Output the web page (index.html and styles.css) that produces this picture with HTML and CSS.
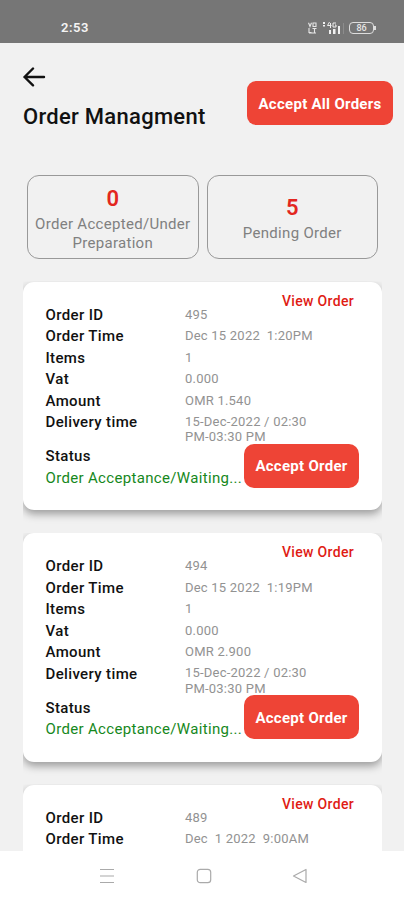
FILE: index.html
```
<!DOCTYPE html>
<html lang="en">
<head>
<meta charset="utf-8">
<title>Order Managment</title>
<link rel="stylesheet" href="styles.css">
</head>
<body>
<div class="screen">
  <div class="statusbar">
    <span class="clock">2:53</span>
    <div class="indicators">
      <svg class="volte" width="9" height="12" viewBox="0 0 9 12" fill="none" stroke="#e6e6e6" stroke-width="1.1"><path d="M.5 .8 2 4.5 3.5 .8M5 1h3v3.5H5zM1 6v4.5h2.5M4.5 6.5h4M6.5 6.5v4M1 11h7"/></svg>
      <svg class="signal" width="24" height="14" viewBox="0 0 24 14"><path fill="#f0f0f0" d="M1 1h2v2H1zM1 4h2v1.500H1zM7 9h2v4H7zM11 8h2.500v5H11zM16 5h2v8h-2z"/><path fill="#8c8c8c" d="M21 2h1v11h-1z"/><path fill="none" stroke="#eee" d="M7.500 1 5.500 4.500h4M8.500 2v5M14 2h-3v4h3V4h-1"/></svg>
      <div class="battery">86</div>
    </div>
  </div>
  <main class="content">
    <header class="header">
      <div>
        <svg class="back" width="23" height="20" viewBox="0 0 23 20" fill="none" stroke="#111" stroke-width="2.400" stroke-linecap="round" stroke-linejoin="round"><path d="M21 10H1.500M10 1.500 1.500 10 10 18.300"/></svg>
        <h1 class="title">Order Managment</h1>
      </div>
      <button class="btn btn-all">Accept All Orders</button>
    </header>
    <section class="stats">
      <div class="stat"><strong>0</strong><span>Order Accepted/Under Preparation</span></div>
      <div class="stat stat-short"><strong>5</strong><span>Pending Order</span></div>
    </section>
    <section class="orders">
      <div class="slot"><article class="card">
        <a class="view">View Order</a>
        <dl class="rows">
          <dt>Order ID</dt><dd>495</dd>
          <dt>Order Time</dt><dd>Dec 15 2022&nbsp; 1:20PM</dd>
          <dt>Items</dt><dd>1</dd>
          <dt>Vat</dt><dd>0.000</dd>
          <dt>Amount</dt><dd>OMR 1.540</dd>
          <dt>Delivery time</dt><dd class="delivery">15-Dec-2022 / 02:30<br>PM-03:30 PM</dd>
          <dt>Status</dt>
        </dl>
        <div class="state">Order Acceptance/Waiting...</div>
        <button class="btn btn-one">Accept Order</button>
      </article></div>
      <div class="slot"><article class="card">
        <a class="view">View Order</a>
        <dl class="rows">
          <dt>Order ID</dt><dd>494</dd>
          <dt>Order Time</dt><dd>Dec 15 2022&nbsp; 1:19PM</dd>
          <dt>Items</dt><dd>1</dd>
          <dt>Vat</dt><dd>0.000</dd>
          <dt>Amount</dt><dd>OMR 2.900</dd>
          <dt>Delivery time</dt><dd class="delivery">15-Dec-2022 / 02:30<br>PM-03:30 PM</dd>
          <dt>Status</dt>
        </dl>
        <div class="state">Order Acceptance/Waiting...</div>
        <button class="btn btn-one">Accept Order</button>
      </article></div>
      <div class="slot"><article class="card">
        <a class="view">View Order</a>
        <dl class="rows">
          <dt>Order ID</dt><dd>489</dd>
          <dt>Order Time</dt><dd>Dec&nbsp; 1 2022&nbsp; 9:00AM</dd>
        </dl>
      </article></div>
    </section>
  </main>
  <nav class="navbar">
    <svg width="16" height="16" viewBox="0 0 16 16" fill="none" stroke="#aaa" stroke-width="1.200"><path d="M1 1.500h14M1 8h14M1 14.500h14"/></svg>
    <svg width="16" height="16" viewBox="0 0 16 16" fill="none" stroke="#aaa" stroke-width="1.200"><rect x="1.300" y="1.300" width="13.400" height="13.400" rx="3"/></svg>
    <svg width="16" height="16" viewBox="0 0 16 16" fill="none" stroke="#aaa" stroke-width="1.200" stroke-linejoin="round"><path d="M14 1.500v13L1.500 8z"/></svg>
  </nav>
</div>
</body>
</html>
```
FILE: styles.css
```
* { box-sizing: border-box; margin: 0; padding: 0; }
body { font-family: Roboto, "Liberation Sans", sans-serif; background: #f1f1f1; color: #111; }
.screen { width: 404px; height: 900px; display: flex; flex-direction: column; overflow: hidden; }
.statusbar { height: 43px; flex: none; background: #767676; display: flex; justify-content: space-between; padding: 20px 30px 0 61px; }
.clock { font-size: 13px; line-height: 16px; font-weight: 600; letter-spacing: .5px; color: #f4f4f4; }
.indicators { display: flex; align-items: flex-start; }
.volte { margin: 2px 5px 0 0; }
.signal { margin: 1px 3px 0 0; }
.battery { position: relative; width: 25px; height: 12px; margin-top: 2px; border: 1px solid #ddd; border-radius: 4px; font-size: 9px; font-weight: 500; line-height: 10px; text-align: center; color: #e6e6e6; }
.battery::after { content: ""; position: absolute; right: -3px; top: 3px; width: 2px; height: 4px; background: #ddd; }
.content { flex: 1; min-height: 0; overflow: hidden; padding: 0 22px 0 23px; }
.header { height: 132px; display: flex; justify-content: space-between; margin-right: -11px; padding-top: 24px; }
.back { display: block; }
.title { font-size: 22px; line-height: 28px; font-weight: 500; margin-top: 16px; letter-spacing: .28px; white-space: nowrap; }
.btn { border: 0; background: #ee4436; color: #fff; font-family: inherit; font-size: 15px; font-weight: 700; letter-spacing: .28px; white-space: nowrap; }
.btn-all { width: 146px; height: 44px; border-radius: 9px; margin-top: 14px; padding-top: 1px; }
.stats { display: flex; gap: 8px; padding: 0 4px; height: 84px; }
.stat { flex: 1; border: 1px solid #999; border-radius: 12px; display: flex; flex-direction: column; align-items: center; justify-content: center; text-align: center; color: #808080; font-size: 15px; line-height: 18.500px; letter-spacing: .3px; padding-top: 3px; }
.stat strong { color: #e32620; font-size: 22px; line-height: 28px; font-weight: 600; margin-bottom: 2px; letter-spacing: 0; }
.orders { margin-top: 22.600px; display: flex; flex-direction: column; gap: 23px; }
.slot { clip-path: inset(0 0 -15px 0); }
.card { position: relative; height: 228.500px; background: #fff; border-radius: 11px; box-shadow: 0 4px 9px rgba(0,0,0,.36); padding: 23.300px 22px 0 22.500px; }
.view { position: absolute; right: 28px; top: 10px; font-size: 14px; line-height: 18px; font-weight: 500; color: #e01b14; letter-spacing: .32px; }
.rows { display: grid; grid-template-columns: 139.500px 1fr; grid-auto-rows: minmax(21.500px, auto); }
.rows dt { font-size: 15px; line-height: 21.500px; font-weight: 500; letter-spacing: .36px; }
.rows dd { font-size: 13px; line-height: 19px; color: #929292; letter-spacing: .22px; white-space: nowrap; }
.rows .delivery { line-height: 15.500px; padding-top: 1.500px; height: 34px; }
.state { font-size: 15px; line-height: 21.500px; color: #16881c; letter-spacing: .33px; white-space: nowrap; }
.btn-one { position: absolute; right: 23px; bottom: 22.500px; width: 115px; height: 44px; border-radius: 10px; padding-top: 1px; }
.navbar { flex: none; height: 49px; background: #fff; display: flex; justify-content: space-between; padding: 17px 96px 0 99px; }
```
